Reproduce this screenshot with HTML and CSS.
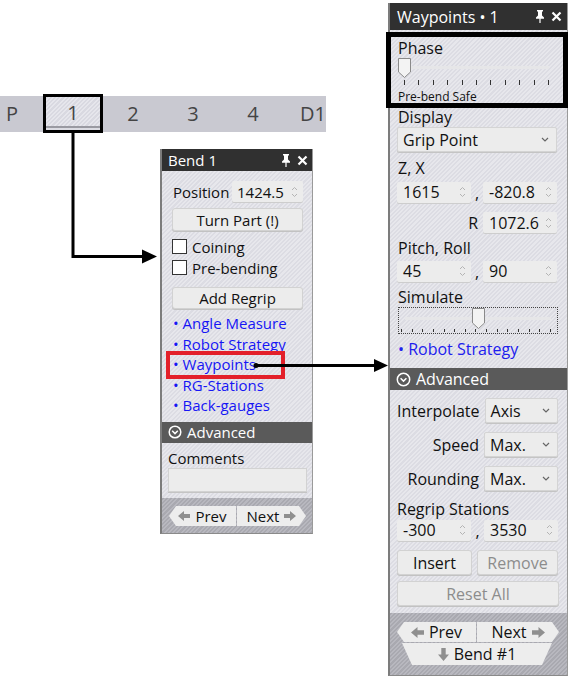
FILE: index.html
```html
<!DOCTYPE html>
<html>
<head>
<meta charset="utf-8">
<link rel="stylesheet" href="styles.css">
</head>
<body>
<div class="canvas">
  <div class="tabbar">
    <span class="tab tab-p">P</span><span class="tab"></span><span class="tab">2</span><span class="tab">3</span><span class="tab">4</span><span class="tab">D1</span>
  </div>
  <div class="tab-sel"><span>1</span></div>

  <section class="panel bend">
    <header class="ph">
      <span class="ptitle">Bend 1</span>
      <span class="picons">
        <svg width="10" height="13" viewBox="0 0 10 13"><path d="M2 0h6v1.6H7v3.9l2 2v1.2H5.6V13H4.4V8.7H1V7.5l2-2V1.6H2z" fill="#fff"/></svg>
        <svg width="11" height="11" viewBox="0 0 11 11"><path d="M1.5 1.5L9.5 9.5M9.5 1.5L1.5 9.5" stroke="#fff" stroke-width="2.2"/></svg>
      </span>
    </header>
    <div class="bbody">
      <div class="posrow">
        <span class="lbl">Position</span>
        <div class="spin bspin"><span>1424.5</span><svg class="sarr" width="7" height="14" viewBox="0 0 7 14"><path d="M1 5L3.5 2.5L6 5M1 9L3.5 11.5L6 9" fill="none" stroke="#b4b4b4"/></svg></div>
      </div>
      <div class="btn bbtn turn">Turn Part (!)</div>
      <div class="chk first"><span class="box"></span>Coining</div>
      <div class="chk"><span class="box"></span>Pre-bending</div>
      <div class="btn bbtn regrip">Add Regrip</div>
      <div class="links">
        <div class="link">• Angle Measure</div>
        <div class="link">• Robot Strategy</div>
        <div class="link">• Waypoints</div>
        <div class="link">• RG-Stations</div>
        <div class="link">• Back-gauges</div>
      </div>
    </div>
    <div class="adv badv">
      <svg width="14" height="14" viewBox="0 0 14 14"><circle cx="7" cy="7" r="5.8" fill="none" stroke="#fff" stroke-width="1.5"/><path d="M4.2 5.8L7 8.6L9.8 5.8" fill="none" stroke="#fff" stroke-width="1.5"/></svg>
      <span>Advanced</span>
    </div>
    <div class="bbody2">
      <div class="lbl">Comments</div>
      <div class="input"></div>
    </div>
    <div class="nav bnav">
      <div class="navrow">
        <div class="nbtn prev"><svg width="12" height="10" viewBox="0 0 12 10"><polygon points="0,5 6,0 6,3 12,3 12,7 6,7 6,10" fill="#8f8f8f"/></svg><span>Prev</span></div>
        <div class="nbtn next"><span>Next</span><svg width="12" height="10" viewBox="0 0 12 10"><polygon points="12,5 6,0 6,3 0,3 0,7 6,7 6,10" fill="#8f8f8f"/></svg></div>
      </div>
    </div>
  </section>

  <section class="panel wp">
    <header class="ph wph">
      <span class="ptitle">Waypoints • 1</span>
      <span class="picons">
        <svg width="10" height="13" viewBox="0 0 10 13"><path d="M2 0h6v1.6H7v3.9l2 2v1.2H5.6V13H4.4V8.7H1V7.5l2-2V1.6H2z" fill="#fff"/></svg>
        <svg width="11" height="11" viewBox="0 0 11 11"><path d="M1.5 1.5L9.5 9.5M9.5 1.5L1.5 9.5" stroke="#fff" stroke-width="2.2"/></svg>
      </span>
    </header>
    <div class="wbody">
      <div class="lbl phase">Phase</div>
      <div class="slider">
        <div class="track"></div>
        <svg class="thumb" width="13" height="20" viewBox="0 0 13 20"><path d="M0.5 0.5H12.5V14L6.5 19.5L0.5 14Z" fill="#f3f3f3" stroke="#8a8a8a"/></svg>
        <div class="ticks"><i></i><i></i><i></i><i></i><i></i><i></i><i></i><i></i><i></i><i></i><i></i></div>
      </div>
      <div class="small">Pre-bend Safe</div>
      <div class="lbl mt2">Display</div>
      <div class="select wide"><span>Grip Point</span><svg width="8" height="5" viewBox="0 0 8 5"><path d="M1 1L4 4L7 1" fill="none" stroke="#666" stroke-width="1.2"/></svg></div>
      <div class="lbl mt6">Z, X</div>
      <div class="pair mt3">
        <div class="spin"><span>1615</span><svg class="sarr" width="7" height="14" viewBox="0 0 7 14"><path d="M1 5L3.5 2.5L6 5M1 9L3.5 11.5L6 9" fill="none" stroke="#b4b4b4"/></svg></div>
        <span class="comma">,</span>
        <div class="spin"><span>-820.8</span><svg class="sarr" width="7" height="14" viewBox="0 0 7 14"><path d="M1 5L3.5 2.5L6 5M1 9L3.5 11.5L6 9" fill="none" stroke="#b4b4b4"/></svg></div>
      </div>
      <div class="frow mt9">
        <span class="lbl">R</span>
        <div class="spin"><span>1072.6</span><svg class="sarr" width="7" height="14" viewBox="0 0 7 14"><path d="M1 5L3.5 2.5L6 5M1 9L3.5 11.5L6 9" fill="none" stroke="#b4b4b4"/></svg></div>
      </div>
      <div class="lbl mt5">Pitch, Roll</div>
      <div class="pair mt2">
        <div class="spin"><span>45</span><svg class="sarr" width="7" height="14" viewBox="0 0 7 14"><path d="M1 5L3.5 2.5L6 5M1 9L3.5 11.5L6 9" fill="none" stroke="#b4b4b4"/></svg></div>
        <span class="comma">,</span>
        <div class="spin"><span>90</span><svg class="sarr" width="7" height="14" viewBox="0 0 7 14"><path d="M1 5L3.5 2.5L6 5M1 9L3.5 11.5L6 9" fill="none" stroke="#b4b4b4"/></svg></div>
      </div>
      <div class="lbl mt5">Simulate</div>
      <div class="simbox">
        <div class="track"></div>
        <svg class="thumb" width="13" height="21" viewBox="0 0 13 21"><path d="M0.5 0.5H12.5V15L6.5 20.5L0.5 15Z" fill="#f3f3f3" stroke="#8a8a8a"/></svg>
        <div class="ticks"><i></i><i></i><i></i><i></i><i></i><i></i><i></i><i></i><i></i><i></i><i></i><i></i><i></i><i></i><i></i></div>
      </div>
      <div class="link wlink">• Robot Strategy</div>
    </div>
    <div class="adv wadv">
      <svg width="15" height="15" viewBox="0 0 15 15"><circle cx="7.5" cy="7.5" r="6.2" fill="none" stroke="#fff" stroke-width="1.5"/><path d="M4.6 6.2L7.5 9.1L10.4 6.2" fill="none" stroke="#fff" stroke-width="1.5"/></svg>
      <span>Advanced</span>
    </div>
    <div class="wbody2">
      <div class="frow">
        <span class="lbl">Interpolate</span>
        <div class="select"><span>Axis</span><svg width="8" height="5" viewBox="0 0 8 5"><path d="M1 1L4 4L7 1" fill="none" stroke="#666" stroke-width="1.2"/></svg></div>
      </div>
      <div class="frow mt9">
        <span class="lbl">Speed</span>
        <div class="select"><span>Max.</span><svg width="8" height="5" viewBox="0 0 8 5"><path d="M1 1L4 4L7 1" fill="none" stroke="#666" stroke-width="1.2"/></svg></div>
      </div>
      <div class="frow mt9">
        <span class="lbl">Rounding</span>
        <div class="select"><span>Max.</span><svg width="8" height="5" viewBox="0 0 8 5"><path d="M1 1L4 4L7 1" fill="none" stroke="#666" stroke-width="1.2"/></svg></div>
      </div>
      <div class="lbl mt8">Regrip Stations</div>
      <div class="pair">
        <div class="spin"><span>-300</span><svg class="sarr" width="7" height="14" viewBox="0 0 7 14"><path d="M1 5L3.5 2.5L6 5M1 9L3.5 11.5L6 9" fill="none" stroke="#b4b4b4"/></svg></div>
        <span class="comma">,</span>
        <div class="spin"><span>3530</span><svg class="sarr" width="7" height="14" viewBox="0 0 7 14"><path d="M1 5L3.5 2.5L6 5M1 9L3.5 11.5L6 9" fill="none" stroke="#b4b4b4"/></svg></div>
      </div>
      <div class="btnrow mt9">
        <div class="btn wbtn ins">Insert</div>
        <div class="btn wbtn rem disabled">Remove</div>
      </div>
      <div class="btn wbtn reset disabled">Reset All</div>
    </div>
    <div class="nav wnav">
      <div class="navrow">
        <div class="nbtn prev"><svg width="13" height="11" viewBox="0 0 13 11"><polygon points="0,5.5 6.5,0 6.5,3.3 13,3.3 13,7.7 6.5,7.7 6.5,11" fill="#8f8f8f"/></svg><span>Prev</span></div>
        <div class="nbtn next"><span>Next</span><svg width="13" height="11" viewBox="0 0 13 11"><polygon points="13,5.5 6.5,0 6.5,3.3 0,3.3 0,7.7 6.5,7.7 6.5,11" fill="#8f8f8f"/></svg></div>
      </div>
      <div class="nbtn bendbtn"><svg width="11" height="13" viewBox="0 0 11 13"><polygon points="5.5,13 0,6.5 3.3,6.5 3.3,0 7.7,0 7.7,6.5 11,6.5" fill="#8f8f8f"/></svg><span>Bend #1</span></div>
    </div>
  </section>

  <div class="callout red"></div>
  <div class="callout black"></div>

  <svg class="connectors" width="585" height="690" viewBox="0 0 585 690">
    <path d="M73 132V256.5H146" stroke="#000" stroke-width="3" fill="none"/>
    <polygon points="142,249.5 157,256.5 142,263.5" fill="#000"/>
    <path d="M256 365.5H377" stroke="#000" stroke-width="3" fill="none"/>
    <polygon points="374,359 388,365.5 374,372" fill="#000"/>
    <circle cx="256" cy="365.5" r="2.5" fill="#000"/>
  </svg>
</div>
</body>
</html>
```

FILE: styles.css
```css
* { box-sizing: border-box; }
html, body { margin: 0; padding: 0; background: #fff; }
body { font-family: "Open Sans", "Noto Sans", "DejaVu Sans", sans-serif; color: #111; }

.canvas { position: relative; width: 585px; height: 690px; overflow: hidden; background: #fff; }

/* tab bar */
.tabbar {
  position: absolute; left: 0; top: 96px; width: 326px; height: 36px;
  background: #c9c9d1; overflow: hidden;
  display: grid; grid-template-columns: 43px 60px 60px 60px 60px 60px;
  align-items: center; font-size: 20px; color: #444; white-space: nowrap;
}
.tab { text-align: center; line-height: 36px; }
.tab-p { text-align: left; padding-left: 6px; }
.tab-sel {
  position: absolute; left: 43px; top: 94px; width: 60px; height: 39px;
  border: 3px solid #000;
  background: repeating-linear-gradient(135deg, #d9d9e1 0 1.5px, #e6e6ec 1.5px 3px);
  box-shadow: inset 0 -2px 0 #dcdce3, inset 0 -4px 0 #9a9aa2;
  display: flex; align-items: center; justify-content: center;
  font-size: 20px; color: #444; padding-bottom: 2px;
}

/* panels */
.panel {
  position: absolute; display: flex; flex-direction: column;
  background: repeating-linear-gradient(135deg, #dcdce3 0 1.5px, #e7e7ec 1.5px 3px);
  border-left: 2px solid #7c7c7c; border-right: 1px solid #9a9a9a; border-bottom: 1px solid #8a8a8a;
}
.bend { left: 160px; top: 149px; width: 153px; height: 385px; font-size: 15px; }
.wp { left: 388px; top: 3px; width: 180px; height: 673px; font-size: 16px; }

.ph {
  height: 22px; flex: none; background: #303030; color: #fff;
  display: flex; align-items: center; justify-content: space-between;
  padding: 0 4px 0 6px; font-size: 15px;
}
.wph { height: 27px; font-size: 16px; padding: 0 5px 0 7px; }
.picons { display: flex; align-items: center; gap: 6px; }

.lbl { line-height: 20px; white-space: nowrap; }

/* bend body */
.bbody { padding: 10px 9px 0 10px; }
.posrow { display: flex; align-items: center; justify-content: space-between; height: 21px; padding-left: 1px; }
.spin {
  display: flex; align-items: center; justify-content: space-between;
  height: 21px; background: #ececec; border-radius: 2px;
  box-shadow: 0 1px 0 #cdcdcd; padding: 0 5px 0 6px; white-space: nowrap;
}
.bspin { width: 71px; padding-left: 5px; }
.btn {
  display: flex; align-items: center; justify-content: center;
  background: #ececec; border: 1px solid #d2d2d2; border-radius: 3px;
  box-shadow: 0 1px 0 #c2c2c2; white-space: nowrap;
}
.bbtn { height: 23px; }
.turn { margin-top: 6px; }
.chk { display: flex; align-items: center; gap: 5px; height: 21px; }
.chk.first { margin-top: 5px; }
.box { width: 15px; height: 15px; background: #fff; border: 1px solid #333; flex: none; }
.regrip { margin-top: 9px; height: 22px; }
.links { margin-top: 4px; padding-left: 1px; }
.link { color: #1616f5; line-height: 20.5px; white-space: nowrap; }

.adv {
  flex: none; background: #5a5a5a; color: #fff;
  display: flex; align-items: center; gap: 5px; white-space: nowrap;
}
.badv { margin-top: 6px; height: 21px; padding-left: 6px; font-size: 15px; }
.bbody2 { padding: 5px 5px 0 6px; }
.input { height: 24px; background: #ececec; border: 1px solid #d2d2d2; box-shadow: 0 1px 0 #c4c4c4; }

.nav {
  margin-top: auto; flex: none;
  background: repeating-linear-gradient(135deg, #a9a9b0 0 1.5px, #b8b8bf 1.5px 3px);
}
.navrow { display: flex; gap: 1px; }
.nbtn {
  display: flex; align-items: center; justify-content: center; gap: 5px;
  background: #ededed; white-space: nowrap;
}
.prev { clip-path: polygon(7px 0, 100% 0, 100% 100%, 7px 100%, 0 50%); }
.next { clip-path: polygon(0 0, calc(100% - 7px) 0, 100% 50%, calc(100% - 7px) 100%, 0 100%); }
.bnav { height: 35px; padding: 8px 0 0 7px; }
.bnav .prev { width: 67px; height: 20px; }
.bnav .next { width: 69px; height: 20px; }

/* waypoints body */
.wbody { padding: 0 10px 0 7px; }
.phase { margin-top: 8px; padding-left: 1px; }
.slider { position: relative; height: 28px; margin: 0 8px 0 1px; }
.slider .track { position: absolute; left: 0; right: 0; top: 8px; height: 3px; background: #e6e6e8; }
.slider .thumb { position: absolute; left: 0; top: 0; }
.slider .ticks { position: absolute; left: 6px; right: 0; top: 22px; height: 5px; display: flex; justify-content: space-between; }
.ticks i { display: block; width: 1px; height: 100%; background: #333; }
.small { font-size: 12px; line-height: 16px; margin-top: 3px; padding-left: 1px; white-space: nowrap; }
.mt2 { margin-top: 2px; }
.mt3 { margin-top: 3px; }
.mt5 { margin-top: 5px; }
.mt6 { margin-top: 6px; }
.mt8 { margin-top: 8px; }
.mt9 { margin-top: 9px; }
.wbody > .lbl { padding-left: 1px; }
.select {
  display: flex; align-items: center; justify-content: space-between;
  height: 25px; width: 74px; background: #ececec; border: 1px solid #d4d4d4; border-radius: 2px;
  box-shadow: 0 1px 0 #c4c4c4; padding: 0 7px 0 5px; white-space: nowrap;
}
.select.wide { width: auto; }
.pair { display: flex; align-items: center; justify-content: space-between; }
.pair .spin { width: 74px; }
.comma { width: 12px; text-align: center; line-height: 20px; padding-top: 2px; }
.frow { display: flex; align-items: center; justify-content: flex-end; gap: 5px; }
.frow .spin { width: 74px; }
.simbox {
  position: relative; height: 27px; margin-left: 1px; margin-right: -1px;
  border: 1px dotted #444;
}
.simbox .track { position: absolute; left: 6px; right: 6px; top: 9px; height: 3px; background: #e6e6e8; }
.simbox .thumb { position: absolute; left: 73px; top: 0; }
.simbox .ticks { position: absolute; left: 2px; right: 6px; bottom: 1px; height: 3px; display: flex; justify-content: space-between; }
.wlink { margin-top: 5px; line-height: 20px; padding-left: 1px; font-size: 16px; color: #2020ee; }
.wadv { margin-top: 9px; height: 22px; padding-left: 6px; font-size: 16px; }
.wbody2 { padding: 8px 9px 0 7px; }
.btnrow { display: flex; justify-content: space-between; }
.wbtn { height: 25px; }
.ins { width: 75px; }
.rem { width: 81px; }
.reset { margin-top: 6px; margin-right: -1px; }
.disabled { color: #8c8c8c; }
.wnav { height: 62px; padding: 9px 0 0 7px; font-size: 16px; }
.wnav .prev { width: 79px; height: 20px; }
.wnav .next { width: 82px; height: 20px; }
.bendbtn {
  width: 150px; height: 22px; margin: 1px 0 0 5px;
  clip-path: polygon(0 0, 100% 0, calc(100% - 10px) 100%, 10px 100%);
}

/* overlays */
.callout { position: absolute; pointer-events: none; }
.red { left: 166px; top: 351px; width: 119px; height: 28px; border: 4px solid #e3202a; }
.black { left: 386px; top: 32px; width: 182px; height: 76px; border: 5px solid #000; }
.connectors { position: absolute; left: 0; top: 0; pointer-events: none; }
```
